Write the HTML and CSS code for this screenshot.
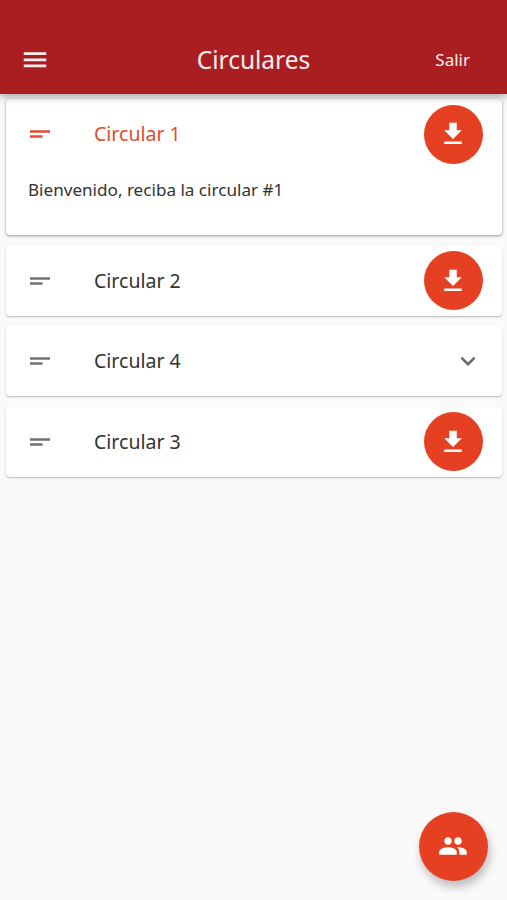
FILE: index.html
```html
<!DOCTYPE html>
<html lang="es">
<head>
    <meta charset="UTF-8">
    <meta name="viewport" content="width=device-width, initial-scale=1.0">
    <title>Circulares</title>
    <link rel="stylesheet" href="styles.css">
</head>
<body>
    <!-- Iconos reutilizables -->
    <svg class="sprite" aria-hidden="true">
        <symbol id="icon-menu" viewBox="0 0 24 24"><path d="M3 5.8h18v2.2H3zM3 10.7h18v2.2H3zM3 15.5h18v2.2H3z"/></symbol>
        <symbol id="icon-text" viewBox="0 0 24 24"><path d="M4 9h16v2H4zM4 13h10v2H4z"/></symbol>
        <symbol id="icon-download" viewBox="0 0 24 24"><path d="M19 9h-4V3H9v6H5l7 7 7-7zM5 18v2h14v-2H5z"/></symbol>
        <symbol id="icon-expand" viewBox="0 0 24 24"><path d="M16.59 8.59L12 13.17 7.41 8.59 6 10l6 6 6-6z"/></symbol>
        <symbol id="icon-people" viewBox="0 0 24 24"><path d="M16 11c1.66 0 2.99-1.34 2.99-3S17.66 5 16 5s-3 1.34-3 3 1.34 3 3 3zm-8 0c1.66 0 2.99-1.34 2.99-3S9.66 5 8 5 5 6.34 5 8s1.34 3 3 3zm0 2c-2.33 0-7 1.17-7 3.5V19h14v-2.5c0-2.33-4.67-3.5-7-3.5zm8 0c-.29 0-.62.02-.97.05 1.16.84 1.97 1.97 1.97 3.45V19h6v-2.5c0-2.33-4.67-3.5-7-3.5z"/></symbol>
    </svg>

    <header class="toolbar">
        <button class="menu-button" aria-label="Menú"><svg class="icon"><use href="#icon-menu"/></svg></button>
        <h1>Circulares</h1>
        <button class="logout">Salir</button>
    </header>

    <!-- Lista de circulares -->
    <main class="list">
        <article class="card open">
            <div class="card-header">
                <svg class="icon"><use href="#icon-text"/></svg>
                <h2>Circular 1</h2>
                <button class="download" aria-label="Descargar"><svg class="icon"><use href="#icon-download"/></svg></button>
            </div>
            <p class="card-body">Bienvenido, reciba la circular #1</p>
        </article>

        <article class="card">
            <div class="card-header">
                <svg class="icon"><use href="#icon-text"/></svg>
                <h2>Circular 2</h2>
                <button class="download" aria-label="Descargar"><svg class="icon"><use href="#icon-download"/></svg></button>
            </div>
        </article>

        <article class="card">
            <div class="card-header">
                <svg class="icon"><use href="#icon-text"/></svg>
                <h2>Circular 4</h2>
                <svg class="icon expand"><use href="#icon-expand"/></svg>
            </div>
        </article>

        <article class="card">
            <div class="card-header">
                <svg class="icon"><use href="#icon-text"/></svg>
                <h2>Circular 3</h2>
                <button class="download" aria-label="Descargar"><svg class="icon"><use href="#icon-download"/></svg></button>
            </div>
        </article>
    </main>

    <!-- Botón flotante -->
    <button class="fab" aria-label="Grupos"><svg class="icon"><use href="#icon-people"/></svg></button>
</body>
</html>
```
FILE: styles.css
```css
* {
    box-sizing: border-box;
}

body {
    margin: 0;
    min-height: 100vh;
    background: #fafafa;
    color: #333333;
    font-family: 'Noto Sans', 'Open Sans', sans-serif;
}

button {
    padding: 0;
    border: none;
    background: none;
    color: inherit;
    font-family: inherit;
    cursor: pointer;
}

.sprite {
    display: none;
}

.icon {
    display: block;
    flex: none;
    width: 30px;
    height: 30px;
    fill: currentColor;
}

/* Barra superior */
.toolbar {
    position: relative;
    z-index: 1;
    display: grid;
    grid-template-columns: 1fr auto 1fr;
    align-items: center;
    height: 94px;
    padding: 26px 37px 0 20px;
    background: #aa1e22;
    color: #fceeee;
    box-shadow: 0 2px 9px rgba(0, 0, 0, 0.4);
}

.toolbar h1 {
    margin: 0 0 0 17px;
    font-size: 24.5px;
    font-weight: 400;
    line-height: 34px;
}

.logout {
    justify-self: end;
    font-size: 17px;
    line-height: 24px;
}

/* Tarjetas */
.list {
    display: flex;
    flex-direction: column;
    gap: 10.6px;
    padding: 5px 5px 0 6px;
}

.card {
    border-radius: 4px;
    background: #ffffff;
    box-shadow: 0 1px 2px rgba(0, 0, 0, 0.28);
}

.card-header {
    display: flex;
    align-items: center;
    height: 70px;
    padding: 0 19px;
    color: #737373;
}

.card-header h2 {
    flex: 1;
    margin: 0 0 0 39px;
    color: #333333;
    font-size: 19.5px;
    font-weight: 400;
    line-height: 28px;
}

.card.open {
    height: 136px;
    box-shadow: 0 1px 3px rgba(0, 0, 0, 0.4);
}

.card.open .card-header,
.card.open h2 {
    color: #e04c2e;
}

.card-body {
    margin: 9px 22px 0;
    font-size: 17.1px;
    line-height: 24px;
}

.download {
    display: flex;
    align-items: center;
    justify-content: center;
    width: 59px;
    height: 59px;
    padding-right: 1px;
    border-radius: 50%;
    background: #e64022;
    color: #ffffff;
}

.expand {
    color: #666666;
}

.fab {
    position: fixed;
    right: 19px;
    bottom: 19px;
    display: flex;
    align-items: center;
    justify-content: center;
    width: 69px;
    height: 69px;
    padding: 0 1px 1px 0;
    border-radius: 50%;
    background: #e64022;
    color: #ffffff;
    box-shadow: 2px 6px 10px rgba(0, 0, 0, 0.25);
}
```
